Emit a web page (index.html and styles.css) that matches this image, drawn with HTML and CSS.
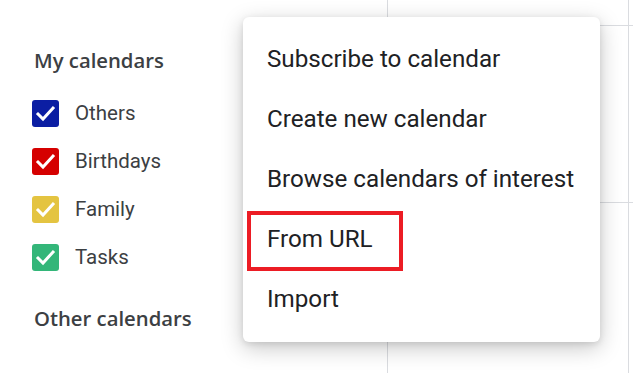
FILE: index.html
```html
<!DOCTYPE html>
<html>
<head>
    <title>Calendars</title>
    <link rel="stylesheet" href="styles.css">
</head>
<body>
    <div class="app">
        <div class="sidebar">
            <div class="section-title">My calendars</div>
            <ul class="cal-list">
                <li class="cal-item">
                    <span class="check blue">
                        <svg viewBox="0 0 27 27"><polyline points="6,14 11,19 21,8"/></svg>
                    </span>
                    <span class="cal-name">Others</span>
                </li>
                <li class="cal-item">
                    <span class="check red">
                        <svg viewBox="0 0 27 27"><polyline points="6,14 11,19 21,8"/></svg>
                    </span>
                    <span class="cal-name">Birthdays</span>
                </li>
                <li class="cal-item">
                    <span class="check yellow">
                        <svg viewBox="0 0 27 27"><polyline points="6,14 11,19 21,8"/></svg>
                    </span>
                    <span class="cal-name">Family</span>
                </li>
                <li class="cal-item">
                    <span class="check green">
                        <svg viewBox="0 0 27 27"><polyline points="6,14 11,19 21,8"/></svg>
                    </span>
                    <span class="cal-name">Tasks</span>
                </li>
            </ul>
            <div class="section-title other">Other calendars</div>
        </div>

        <div class="grid">
            <div class="cell"></div>
            <div class="cell last"></div>
            <div class="cell"></div>
            <div class="cell last"></div>
            <div class="cell bottom"></div>
            <div class="cell last bottom"></div>
        </div>

        <!-- add calendar dropdown -->
        <div class="menu">
            <div class="menu-item">Subscribe to calendar</div>
            <div class="menu-item">Create new calendar</div>
            <div class="menu-item">Browse calendars of interest</div>
            <div class="menu-item marked">From URL</div>
            <div class="menu-item">Import</div>
        </div>
    </div>
</body>
</html>
```

FILE: styles.css
```css
body {
    margin: 0;
    background: #fff;
    font-family: Roboto, "Liberation Sans", Arial, sans-serif;
    overflow: hidden;
}

.app {
    position: relative;
    display: flex;
    height: 373px;
}

.sidebar {
    width: 353px;
    padding: 44px 0 0 34px;
}

.section-title {
    font-family: "Open Sans", Roboto, sans-serif;
    font-size: 20.3px;
    font-weight: 600;
    color: #3c4043;
    line-height: 32px;
}

.section-title.other {
    margin-top: 21px;
}

.cal-list {
    list-style: none;
    margin: 13px 0 0 0;
    padding: 0;
}

.cal-item {
    display: flex;
    align-items: center;
    height: 48px;
}

.check {
    width: 27px;
    height: 27px;
    border-radius: 3px;
    margin-left: -2px;
    margin-right: 16px;
    display: flex;
}

.check svg {
    width: 27px;
    height: 27px;
    fill: none;
    stroke: #fff;
    stroke-width: 3;
    stroke-linecap: square;
}

.check.blue { background: #0b1ea3; }
.check.red { background: #d50000; }
.check.yellow { background: #e4c441; }
.check.green { background: #33b679; }

.cal-name {
    font-size: 20.5px;
    color: #3c4043;
}

.grid {
    flex: 1;
    display: grid;
    grid-template-columns: 241px 1fr;
    grid-template-rows: 26px 177px 1fr;
    border-left: 1px solid #dadce0;
}

.cell {
    border-right: 1px solid #dadce0;
    border-bottom: 1px solid #dadce0;
}

.cell.last {
    border-right: none;
}

.cell.bottom {
    border-bottom: none;
}

.menu {
    position: absolute;
    left: 243px;
    top: 17px;
    width: 357px;
    padding: 12px 0 13px 0;
    background: #fff;
    border-radius: 6px;
    box-shadow: 0 6px 22px rgba(0, 0, 0, 0.22), 0 2px 6px rgba(0, 0, 0, 0.1);
}

.menu-item {
    position: relative;
    height: 60px;
    line-height: 60px;
    padding-left: 24px;
    font-size: 24.2px;
    color: #202124;
    white-space: nowrap;
}

.menu-item.marked::after {
    content: "";
    position: absolute;
    left: 4px;
    top: 2px;
    width: 148px;
    height: 52px;
    border: 4px solid #ec1c24;
}
```
